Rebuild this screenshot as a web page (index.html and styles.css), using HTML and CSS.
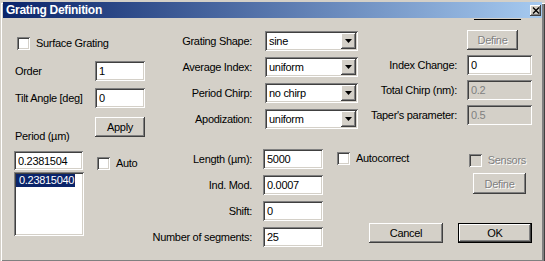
FILE: index.html
```html
<!DOCTYPE html>
<html lang="en">
<head>
    <meta charset="UTF-8">
    <title>Grating Definition</title>
    <link rel="stylesheet" href="styles.css">
</head>
<body>
<div class="window">
    <div class="titlebar">
        <span class="title">Grating Definition</span>
        <span class="close-btn">
            <svg width="8" height="7" viewBox="0 0 8 7"><path d="M1 0.5 L7 6.5 M7 0.5 L1 6.5" stroke="#000" stroke-width="1.4"/></svg>
        </span>
    </div>
    <div class="strip"><span class="strip-line"></span></div>

    <div class="content">
        <!-- left column -->
        <div class="col-left">
            <div class="check-row surface"><span class="check"></span>Surface Grating</div>
            <div class="field-row order-row"><span>Order</span><input class="edit small" value="1"></div>
            <div class="field-row tilt-row"><span>Tilt Angle [deg]</span><input class="edit small" value="0"></div>
            <div class="apply-row">
                <span class="period-label">Period (µm)</span>
                <button class="btn apply">Apply</button>
            </div>
            <div class="period-row">
                <input class="edit period" value="0.2381504">
                <div class="check-row auto"><span class="check"></span>Auto</div>
            </div>
            <div class="listbox"><span class="list-item selected">0.23815040</span></div>
        </div>

        <!-- main area -->
        <div class="col-main">
            <div class="top-block">
                <div class="shape-grid">
                    <span class="lbl">Grating Shape:</span>
                    <div class="combo"><span class="combo-text">sine</span><span class="drop"><svg width="7" height="4" viewBox="0 0 7 4"><polygon points="0,0 7,0 3.5,4" fill="#000"/></svg></span></div>
                    <span class="lbl">Average Index:</span>
                    <div class="combo"><span class="combo-text">uniform</span><span class="drop"><svg width="7" height="4" viewBox="0 0 7 4"><polygon points="0,0 7,0 3.5,4" fill="#000"/></svg></span></div>
                    <span class="lbl">Period Chirp:</span>
                    <div class="combo"><span class="combo-text">no chirp</span><span class="drop"><svg width="7" height="4" viewBox="0 0 7 4"><polygon points="0,0 7,0 3.5,4" fill="#000"/></svg></span></div>
                    <span class="lbl">Apodization:</span>
                    <div class="combo"><span class="combo-text">uniform</span><span class="drop"><svg width="7" height="4" viewBox="0 0 7 4"><polygon points="0,0 7,0 3.5,4" fill="#000"/></svg></span></div>
                </div>

                <div class="side-grid">
                    <span></span>
                    <button class="btn define disabled">Define</button>
                    <span class="lbl">Index Change:</span>
                    <input class="edit" value="0">
                    <span class="lbl">Total Chirp (nm):</span>
                    <input class="edit disabled" value="0.2" disabled>
                    <span class="lbl">Taper's parameter:</span>
                    <input class="edit disabled" value="0.5" disabled>
                </div>
            </div>

            <div class="bottom-block">
                <div class="field-grid">
                    <span class="lbl">Length (µm):</span>
                    <input class="edit" value="5000">
                    <span class="lbl">Ind. Mod.</span>
                    <input class="edit" value="0.0007">
                    <span class="lbl">Shift:</span>
                    <input class="edit" value="0">
                    <span class="lbl">Number of segments:</span>
                    <input class="edit" value="25">
                </div>

                <div class="actions">
                    <div class="actions-top">
                        <div class="check-row autocorrect"><span class="check"></span>Autocorrect</div>
                        <div class="check-row sensors disabled"><span class="check"></span>Sensors</div>
                    </div>
                    <button class="btn define-sensors disabled">Define</button>
                    <div class="dialog-buttons">
                        <button class="btn wide">Cancel</button>
                        <button class="btn wide default">OK</button>
                    </div>
                </div>
            </div>
        </div>
    </div>
</div>
</body>
</html>
```

FILE: styles.css
```css
body {
    margin: 0;
    background: #d4d0c8;
    font-family: "Liberation Sans", Arial, sans-serif;
    font-size: 11px;
    letter-spacing: -0.3px;
    color: #000;
}

.window {
    width: 545px;
    height: 261px;
    box-sizing: border-box;
    background: #d4d0c8;
    box-shadow: inset 1px 1px #d4d0c8, inset 2px 2px #fff,
                inset -1px -1px #404040, inset -3px -3px #808080;
}

/* title bar */
.titlebar {
    margin: 2px 3px 0 3px;
    height: 16px;
    display: flex;
    align-items: center;
    justify-content: space-between;
    background: linear-gradient(to right, #0a246a, #a6caf0);
}

.title {
    color: #fff;
    font-weight: bold;
    font-size: 12px;
    padding-left: 3px;
    line-height: 16px;
}

.close-btn {
    width: 11px;
    height: 11px;
    margin-right: 1px;
    display: flex;
    align-items: center;
    justify-content: center;
    background: #d4d0c8;
    box-shadow: inset -1px -1px #404040, inset 1px 1px #fff, inset -2px -2px #808080;
}

.strip {
    height: 2px;
    display: flex;
    justify-content: flex-end;
}

.strip-line {
    width: 47px;
    height: 1px;
    margin-top: 1px;
    margin-right: 24px;
    background: #000;
}

.content {
    display: flex;
    padding-left: 14px;
}

/* shared controls */
.edit {
    box-sizing: border-box;
    height: 20px;
    border: none;
    outline: none;
    margin: 0;
    padding: 0 4px;
    background: #fff;
    font-family: inherit;
    font-size: 11px;
    letter-spacing: -0.3px;
    color: #000;
    box-shadow: inset 1px 1px #808080, inset -1px -1px #fff,
                inset 2px 2px #404040, inset -2px -2px #d4d0c8;
}

.edit.disabled {
    background: #d4d0c8;
    color: #808080;
}

.btn {
    box-sizing: border-box;
    height: 20px;
    margin: 0;
    padding: 0;
    border: none;
    background: #d4d0c8;
    font-family: inherit;
    font-size: 11px;
    letter-spacing: -0.3px;
    color: #000;
    box-shadow: inset -1px -1px #404040, inset 1px 1px #fff,
                inset -2px -2px #808080;
}

.btn.disabled {
    color: #808080;
    text-shadow: 1px 1px #fff;
}

.btn.default {
    box-shadow: inset 0 0 0 1px #000, inset -2px -2px #404040,
                inset 2px 2px #fff, inset -3px -3px #808080;
}

.check-row {
    display: flex;
    align-items: center;
    gap: 6px;
    line-height: 13px;
}

.check {
    width: 13px;
    height: 13px;
    box-sizing: border-box;
    background: #fff;
    box-shadow: inset 1px 1px #808080, inset -1px -1px #fff,
                inset 2px 2px #404040, inset -2px -2px #d4d0c8;
}

.check-row.disabled {
    color: #808080;
    text-shadow: 1px 1px #fff;
}

.check-row.disabled .check {
    background: #d4d0c8;
}

.lbl {
    text-align: right;
    white-space: nowrap;
}

/* left column */
.col-left {
    width: 132px;
    display: flex;
    flex-direction: column;
}

.surface {
    margin-top: 17px;
    margin-left: 3px;
}

.field-row {
    display: flex;
    align-items: center;
    padding-left: 1px;
}

.field-row .edit {
    margin-left: auto;
    margin-right: 1px;
}

.edit.small {
    width: 50px;
}

.order-row {
    margin-top: 11px;
}

.tilt-row {
    margin-top: 7px;
}

.apply-row {
    display: flex;
    align-items: flex-start;
    margin-top: 9px;
    padding-left: 1px;
}

.period-label {
    margin-top: 13px;
    line-height: 13px;
}

.apply {
    width: 50px;
    margin-left: auto;
    margin-right: 1px;
}

.period-row {
    display: flex;
    align-items: flex-start;
    margin-top: 8px;
}

.edit.period {
    width: 69px;
    height: 19px;
}

.auto {
    margin-left: 14px;
    margin-top: 6px;
}

.listbox {
    width: 70px;
    height: 64px;
    margin-top: 2px;
    box-sizing: border-box;
    padding: 2px;
    background: #fff;
    box-shadow: inset 1px 1px #808080, inset -1px -1px #fff,
                inset 2px 2px #404040, inset -2px -2px #d4d0c8;
}

.list-item {
    display: inline-block;
    padding: 0 1px 0 3px;
    line-height: 13px;
}

.list-item.selected {
    background: #0a246a;
    color: #fff;
}

/* main area */
.col-main {
    margin-left: 4px;
    display: flex;
    flex-direction: column;
}

.top-block {
    display: flex;
    align-items: flex-start;
}

.shape-grid {
    display: grid;
    grid-template-columns: 102px 93px;
    grid-auto-rows: 20px;
    column-gap: 13px;
    row-gap: 6px;
    align-items: center;
    margin-top: 11px;
}

.combo {
    box-sizing: border-box;
    height: 20px;
    display: flex;
    padding: 2px;
    background: #fff;
    box-shadow: inset 1px 1px #808080, inset -1px -1px #fff,
                inset 2px 2px #404040, inset -2px -2px #d4d0c8;
}

.combo-text {
    flex: 1;
    padding-left: 2px;
    line-height: 16px;
}

.drop {
    width: 15px;
    height: 16px;
    display: flex;
    align-items: center;
    justify-content: center;
    background: #d4d0c8;
    box-shadow: inset -1px -1px #404040, inset 1px 1px #fff,
                inset -2px -2px #808080;
}

.side-grid {
    display: grid;
    grid-template-columns: 87px 65px;
    grid-auto-rows: 20px;
    column-gap: 10px;
    row-gap: 5px;
    align-items: center;
    margin-top: 10px;
    margin-left: 12px;
}

.define {
    width: 51px;
}

.bottom-block {
    display: flex;
    align-items: flex-start;
    margin-top: 20px;
}

.field-grid {
    display: grid;
    grid-template-columns: 102px 60px;
    grid-auto-rows: 20px;
    column-gap: 11px;
    row-gap: 6px;
    align-items: center;
}

.actions {
    width: 195px;
    margin-left: 14px;
    display: flex;
    flex-direction: column;
}

.actions-top {
    height: 20px;
    display: flex;
    align-items: flex-start;
    justify-content: space-between;
}

.autocorrect {
    margin-top: 3px;
}

.sensors {
    margin-top: 5px;
    margin-right: 6px;
}

.define-sensors {
    width: 53px;
    height: 21px;
    margin-top: 4px;
    margin-right: 6px;
    align-self: flex-end;
}

.dialog-buttons {
    display: flex;
    justify-content: flex-end;
    gap: 15px;
    margin-top: 29px;
}

.btn.wide {
    width: 74px;
}
```
